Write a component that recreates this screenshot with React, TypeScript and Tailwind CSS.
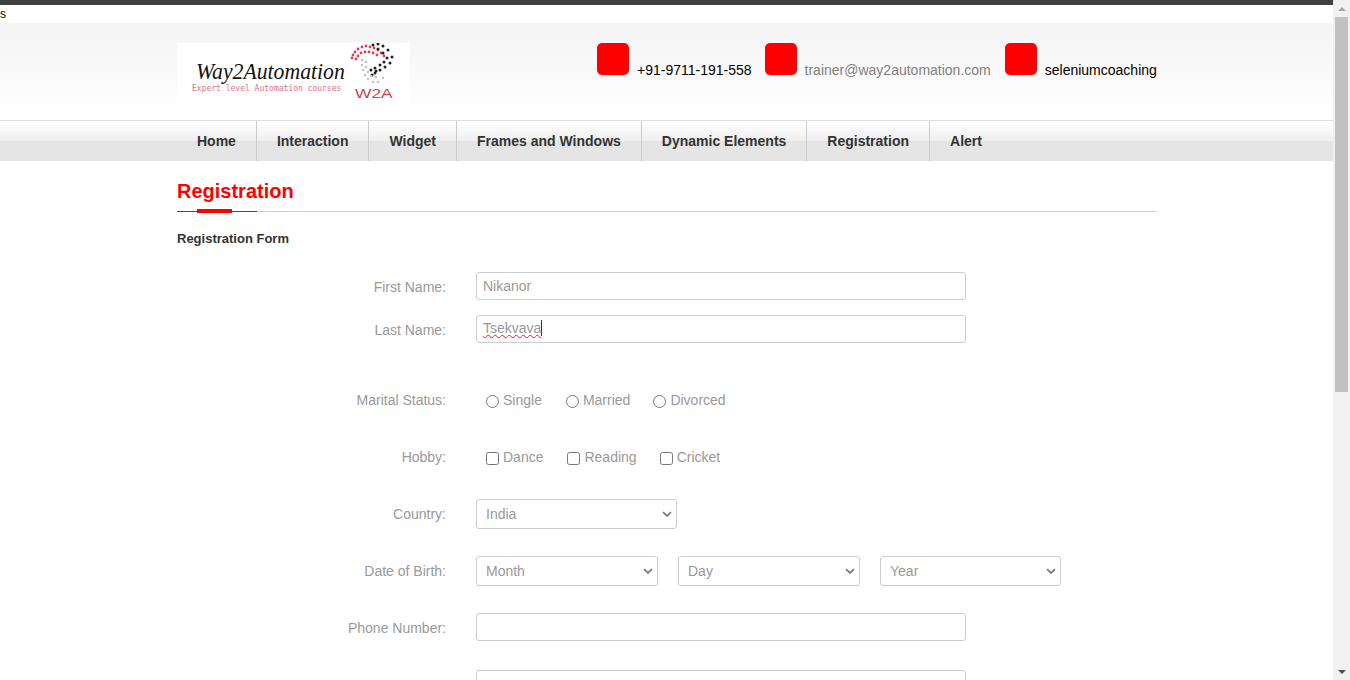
const navItems = ['Home', 'Interaction', 'Widget', 'Frames and Windows', 'Dynamic Elements', 'Registration', 'Alert'];

function Logo() {
    const red = [[352, 15], [353, 12], [355, 9], [358, 6], [362, 4], [366, 3], [370, 4], [374, 5], [378, 7], [381, 10], [384, 13], [356, 16], [358, 13], [361, 10], [365, 9], [369, 9], [373, 10], [377, 12]];
    const dark = [[373, 2], [378, 1], [383, 3], [388, 7], [392, 14], [390, 20], [385, 24], [380, 27], [375, 30], [372, 32], [378, 6], [383, 10], [387, 15], [384, 19], [380, 22], [375, 25], [371, 27], [376, 28]];
    const gray = [[362, 17], [362, 22], [363, 27], [365, 32], [368, 36], [373, 39], [378, 39], [383, 35], [366, 19], [366, 24], [368, 29], [371, 33], [376, 34]];

    return (
        <div className="w-[233px] h-[63px] bg-white relative">
            <span className="absolute left-[19px] top-[13px] text-[24px] leading-[30px] italic text-[#111] font-['Liberation_Serif',serif] whitespace-nowrap scale-x-[0.905] origin-left">Way2Automation</span>
            <span className="absolute left-[15px] top-[41px] text-[8px] leading-[10px] text-[#d9737f] font-['DejaVu_Sans_Mono',monospace] whitespace-nowrap">Expert level Automation courses</span>
            <span className="absolute left-[178px] top-[46px] text-[12px] leading-[10px] text-[#c9404f] scale-x-[1.45] origin-left font-['Liberation_Sans',sans-serif]">W2A</span>
            <svg className="absolute left-0 top-0" width="233" height="63" viewBox="177 0 233 63">
                {red.map(([x, y], i) => <circle key={i} cx={x} cy={y} r="1.4" fill="#d8404f" />)}
                {dark.map(([x, y], i) => <circle key={i} cx={x} cy={y} r="1.5" fill="#222" />)}
                {gray.map(([x, y], i) => <circle key={i} cx={x} cy={y} r="1.3" fill="#c4c4c4" />)}
            </svg>
        </div>
    );
}

function Contact({ text, gray, className }: { text: string; gray?: boolean; className: string }) {
    return (
        <div className={`flex items-start gap-2 ${className}`}>
            <div className="w-8 h-8 rounded-[5px] bg-[#ff0000]" />
            <span className={`mt-[19px] text-sm leading-4 whitespace-nowrap ${gray ? 'text-[#808080]' : 'text-black'}`}>{text}</span>
        </div>
    );
}

function Row({ label, low, className, children }: { label: string; low?: boolean; className: string; children?: React.ReactNode }) {
    return (
        <div className={`flex items-center ${className}`}>
            <label className={`w-[269px] mr-[30px] text-right text-sm text-[#999] ${low ? 'pt-[2px]' : ''}`}>{label}</label>
            {children}
        </div>
    );
}

function TextBox({ value }: { value?: string }) {
    return <input readOnly value={value ?? ''} className="w-[490px] h-7 px-[6px] border border-[#ccc] rounded-[3px] text-sm text-[#999] outline-none" />;
}

function Choice({ type, label, className }: { type: string; label: string; className: string }) {
    return (
        <div className={`flex items-center ${className}`}>
            <input type={type} name={label} className="w-[13px] h-[13px] mt-[2px] mr-[4px]" />
            <span className="text-sm text-[#999]">{label}</span>
        </div>
    );
}

function Dropdown({ value, className }: { value: string; className: string }) {
    return (
        <div className={`relative h-[30px] ${className}`}>
            <select defaultValue={value} className="w-full h-full pl-[9px] appearance-none bg-white border border-[#ccc] rounded-[3px] text-sm text-[#999] outline-none">
                <option>{value}</option>
            </select>
            <svg className="absolute right-[5px] top-[12px]" width="10" height="7" viewBox="0 0 10 7" fill="none">
                <path d="M1 1.2 L5 5 L9 1.2" stroke="#7d7d7d" strokeWidth="1.8" />
            </svg>
        </div>
    );
}

export default function App() {
    return (
        <div className="flex h-[680px] overflow-hidden bg-white font-['Liberation_Sans',Arial,sans-serif]">
            <div className="w-[1333px] shrink-0">
                <div className="h-[5px] bg-[#404040]" />
                <div className="h-[18px] text-xs leading-[18px] text-black">s</div>

                <header className="h-[97px] pl-[177px] pt-5 flex bg-gradient-to-b from-[#f4f4f4] to-white">
                    <Logo />
                    <div className="flex ml-[187px]">
                        <Contact text="+91-9711-191-558" className="mr-[13px]" />
                        <Contact text="trainer@way2automation.com" gray className="mr-[14px]" />
                        <Contact text="seleniumcoaching" className="" />
                    </div>
                </header>

                <nav className="h-[41px] border-t border-[#e0e0e0] flex pl-[177px] bg-[linear-gradient(to_bottom,#ffffff_0%,#eeeeee_50%,#e5e5e5_50%,#e5e5e5_100%)]">
                    {navItems.map((item, i) => (
                        <a key={item} className={`h-10 px-5 flex items-center text-sm font-bold text-[#333] ${i < navItems.length - 1 ? 'border-r border-[#ccc]' : ''}`}>{item}</a>
                    ))}
                </nav>

                <main className="w-[980px] ml-[177px]">
                    <h1 className="mt-[16px] text-[20px] leading-[28px] font-bold text-[#ff0000]">Registration</h1>
                    <div className="relative h-px mt-[6px] bg-[#ccc]">
                        <div className="absolute left-0 top-0 w-20 h-px bg-[#ff0000]" />
                        <div className="absolute left-5 top-[-2px] w-[35px] h-1 bg-[#ff0000]" />
                    </div>
                    <h2 className="mt-[18px] text-[13px] leading-[18px] font-bold text-[#333]">Registration Form</h2>

                    <Row label="First Name:" low className="mt-[24px]"><TextBox value="Nikanor" /></Row>
                    <Row label="Last Name:" low className="mt-[15px]">
                        <div className="w-[490px] h-7 px-[6px] border border-[#ccc] rounded-[3px] text-sm leading-[25px] text-[#999]">
                            <span className="underline decoration-wavy decoration-[#e02020] decoration-1 border-r border-[#333]">Tsekvava</span>
                        </div>
                    </Row>
                    <Row label="Marital Status:" className="mt-[47px] h-5">
                        <Choice type="radio" label="Single" className="ml-[10px] mr-[24px]" />
                        <Choice type="radio" label="Married" className="mr-[23px]" />
                        <Choice type="radio" label="Divorced" className="" />
                    </Row>
                    <Row label="Hobby:" className="mt-[37px] h-5">
                        <Choice type="checkbox" label="Dance" className="ml-[10px] mr-[24px]" />
                        <Choice type="checkbox" label="Reading" className="mr-[23px]" />
                        <Choice type="checkbox" label="Cricket" className="" />
                    </Row>
                    <Row label="Country:" className="mt-[32px]">
                        <Dropdown value="India" className="w-[201px]" />
                    </Row>
                    <Row label="Date of Birth:" className="mt-[27px]">
                        <div className="flex gap-5">
                            <Dropdown value="Month" className="w-[182px]" />
                            <Dropdown value="Day" className="w-[182px]" />
                            <Dropdown value="Year" className="w-[181px]" />
                        </div>
                    </Row>
                    <Row label="Phone Number:" low className="mt-[27px]"><TextBox /></Row>
                    <Row label="" className="mt-[29px]"><TextBox /></Row>
                </main>
            </div>

            <div className="w-[17px] shrink-0 h-[680px] bg-[#f1f1f1] flex flex-col items-center">
                <div className="h-[17px] flex items-center justify-center">
                    <div className="w-0 h-0 border-x-[4px] border-x-transparent border-b-[4px] border-b-[#a3a3a3]" />
                </div>
                <div className="w-[13px] h-[375px] bg-[#c1c1c1]" />
                <div className="mt-auto h-[17px] flex items-center justify-center">
                    <div className="w-0 h-0 border-x-[4px] border-x-transparent border-t-[4px] border-t-[#505050]" />
                </div>
            </div>
        </div>
    );
}
